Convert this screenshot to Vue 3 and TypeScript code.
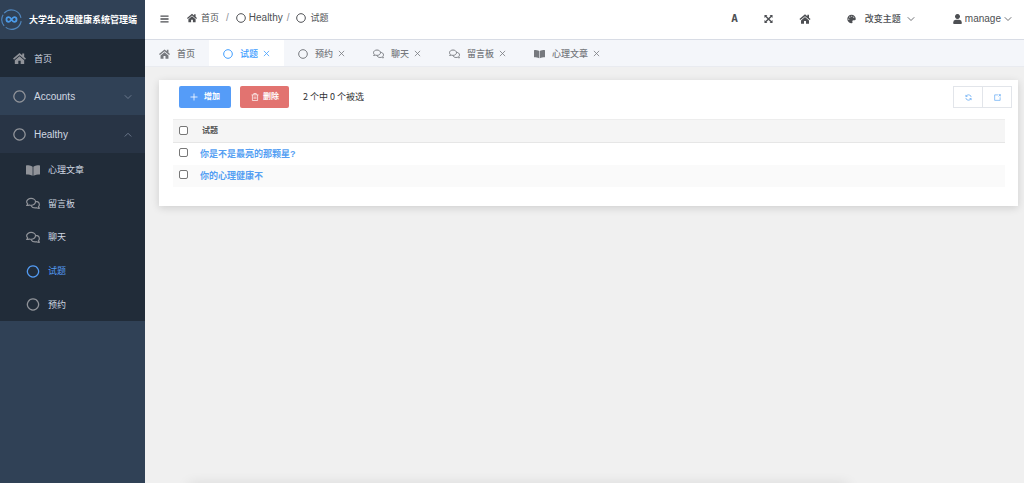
<script setup lang="ts">
import { computed, defineComponent, h, ref } from 'vue'

type Shape = { d: string; box: string; line?: number }

const shapes: Record<string, Shape> = {
  home: {
    box: '0 0 20 18',
    d: 'M10 .6 L0 9 L1.6 11 L10 4 L18.4 11 L20 9 L17.2 6.6 V1.4 H14.2 V4.1 Z M10 5.6 L2.8 11.6 V17.6 H8.2 V12.6 H11.8 V17.6 H17.2 V11.6 Z',
  },
  circle: { box: '0 0 20 20', line: 2, d: 'M10 1.4 A8.6 8.6 0 1 1 9.99 1.4 Z' },
  book: {
    box: '0 0 22 18',
    d: 'M10.4 3 C8 1.2 4 .8 1 .8 Q0 .8 0 1.8 V14.4 Q0 15.4 1 15.4 C4 15.5 7.5 15.9 10.4 17.4 Z M11.6 3 C14 1.2 18 .8 21 .8 Q22 .8 22 1.8 V14.4 Q22 15.4 21 15.4 C18 15.5 14.5 15.9 11.6 17.4 Z',
  },
  chat: {
    box: '0 0 22 18',
    line: 1.9,
    d: 'M1.2 12 C2.2 11.2 2.5 10.4 2.6 9.6 C1.6 8.7 1 7.6 1 6.4 C1 3.4 4.2 1 8 1 C11.8 1 15 3.4 15 6.4 C15 9.4 11.8 11.8 8 11.8 C7 11.8 6 11.6 5.2 11.3 C4 12 2.6 12.3 1.2 12 Z M15 5.6 C18.4 5.8 21 8 21 10.8 C21 12 20.5 13 19.6 13.9 C19.7 14.8 20.2 15.6 21 16.5 C19.5 16.7 18 16.3 16.9 15.6 C16 15.9 15.1 16 14.2 16 C11.6 16 9.3 14.8 8.2 12.9',
  },
  menu: { box: '0 0 20 20', line: 2.8, d: 'M1 3.5 H19 M1 10 H19 M1 16.5 H19' },
  expand: {
    box: '0 0 20 20',
    d: 'M1 1 H7.6 L5.4 3.2 L10 7.8 L14.6 3.2 L12.4 1 H19 V7.6 L16.8 5.4 L12.2 10 L16.8 14.6 L19 12.4 V19 H12.4 L14.6 16.8 L10 12.2 L5.4 16.8 L7.6 19 H1 V12.4 L3.2 14.6 L7.8 10 L3.2 5.4 L1 7.6 Z',
  },
  palette: {
    box: '0 0 20 20',
    d: 'M10 .5 A9.5 9.5 0 1 0 10.4 19.5 C12.4 19.3 12.6 17.6 12 16.2 C11.2 14.4 12.4 12.6 14.2 12.6 H17.2 C18.7 12.6 19.5 11.6 19.5 10 C19.5 4.8 15.2 .5 10 .5 Z M4 11.8 a1.2 1.2 0 1 1 .01 0 Z M6.2 7 a1.2 1.2 0 1 1 .01 0 Z M10.6 5.2 a1.2 1.2 0 1 1 .01 0 Z M15 7.4 a1.2 1.2 0 1 1 .01 0 Z',
  },
  user: {
    box: '0 0 18 20',
    d: 'M9 0 A5 5 0 1 1 8.99 0 Z M5.4 11.5 H12.6 Q17.6 11.8 17.6 17 V18.4 Q17.6 20 16 20 H2 Q.4 20 .4 18.4 V17 Q.4 11.8 5.4 11.5 Z',
  },
  down: { box: '0 0 16 16', line: 1.6, d: 'M1.5 4.5 L8 11 L14.5 4.5' },
  up: { box: '0 0 16 16', line: 1.6, d: 'M1.5 11 L8 4.5 L14.5 11' },
  close: { box: '0 0 16 16', line: 1.8, d: 'M2 2 L14 14 M14 2 L2 14' },
  plus: { box: '0 0 16 16', line: 1.6, d: 'M8 1 V15 M1 8 H15' },
  trash: { box: '0 0 16 16', line: 1.4, d: 'M1 3.7 H15 M5.5 3.5 V1 H10.5 V3.5 M2.8 4 V15 H13.2 V4 M6.3 7 V12 M9.7 7 V12' },
  refresh: {
    box: '0 0 16 16',
    line: 1.7,
    d: 'M2 2 V5.6 H5.6 M2.3 5.4 A6.3 6.3 0 0 1 14.2 7 M14 14 V10.4 H10.4 M13.7 10.6 A6.3 6.3 0 0 1 1.8 9',
  },
  share: { box: '0 0 16 16', line: 1.6, d: 'M9 2 H1.5 V14.5 H14 V7.5 M10.5 1.5 H14.5 V5.5 M14.5 1.5 L10.5 5.5' },
}

const Icon = defineComponent({
  props: { name: { type: String, required: true } },
  setup(props) {
    return () => {
      const s = shapes[props.name]
      const paint = s.line
        ? { fill: 'none', stroke: 'currentColor', 'stroke-width': s.line }
        : { fill: 'currentColor', 'fill-rule': 'evenodd' }
      return h('svg', { viewBox: s.box, 'aria-hidden': 'true' }, [h('path', { d: s.d, ...paint })])
    }
  },
})

const subItems = [
  { icon: 'book', label: '心理文章' },
  { icon: 'chat', label: '留言板' },
  { icon: 'chat', label: '聊天' },
  { icon: 'circle', label: '试题' },
  { icon: 'circle', label: '预约' },
]
const tabs = ref([
  { icon: 'home', label: '首页' },
  { icon: 'circle', label: '试题' },
  { icon: 'circle', label: '预约' },
  { icon: 'chat', label: '聊天' },
  { icon: 'chat', label: '留言板' },
  { icon: 'book', label: '心理文章' },
])
const active = ref('试题')
const rows = ref([
  { id: 1, title: '你是不是最亮的那颗星?', picked: false },
  { id: 2, title: '你的心理健康不', picked: false },
])
const pickedCount = computed(() => rows.value.filter((r) => r.picked).length)
const allPicked = computed({
  get: () => rows.value.length > 0 && pickedCount.value === rows.value.length,
  set: (v: boolean) => rows.value.forEach((r) => (r.picked = v)),
})
function closeTab(label: string) {
  tabs.value = tabs.value.filter((t) => t.label !== label)
}
</script>

<template>
  <div class="layout">
    <aside class="sidebar">
      <div class="brand">
        <svg class="logo" viewBox="0 0 40 40" aria-hidden="true">
          <path d="M6 8 A18.5 18.5 0 0 1 38 17 M38.4 23 A18.5 18.5 0 0 1 9 35 M6 32 A18.5 18.5 0 0 1 4 11" fill="none" stroke="#5086bd" stroke-width="2.2" />
          <path d="M20 20 C18 16.8 16.8 15.6 14.8 15.6 A4.4 4.4 0 0 0 14.8 24.4 C18.8 24.4 21.2 15.6 25.2 15.6 A4.4 4.4 0 0 1 25.2 24.4 C23.2 24.4 22 23.2 20 20" fill="none" stroke="#4b9ae8" stroke-width="3.4" />
        </svg>
        <h1>大学生心理健康系统管理端</h1>
      </div>
      <nav>
        <a href="#" class="item first"><Icon name="home" /><span>首页</span></a>
        <button type="button" class="item group"><Icon name="circle" /><span>Accounts</span><Icon name="down" class="arrow" /></button>
        <button type="button" class="item group open"><Icon name="circle" /><span>Healthy</span><Icon name="up" class="arrow" /></button>
        <div class="submenu">
          <a v-for="s in subItems" :key="s.label" href="#" class="sub" :class="{ on: s.label === active }" @click.prevent="active = s.label">
            <Icon :name="s.icon" /><span>{{ s.label }}</span>
          </a>
        </div>
      </nav>
    </aside>

    <div class="main">
      <header class="topbar">
        <button type="button" class="plain burger" aria-label="菜单"><Icon name="menu" /></button>
        <div class="crumbs">
          <span class="crumb"><Icon name="home" />首页</span>
          <span class="slash">/</span>
          <span class="crumb latin"><Icon name="circle" />Healthy</span>
          <span class="slash">/</span>
          <span class="crumb"><Icon name="circle" />试题</span>
        </div>
        <div class="tools">
          <button type="button" class="plain font" aria-label="字体">A</button>
          <button type="button" class="plain" aria-label="全屏"><Icon name="expand" /></button>
          <button type="button" class="plain" aria-label="主页"><Icon name="home" class="wide" /></button>
          <button type="button" class="plain theme"><Icon name="palette" /><span>改变主题</span><Icon name="down" class="caret" /></button>
          <button type="button" class="plain user"><Icon name="user" /><span>manage</span><Icon name="down" class="caret" /></button>
        </div>
      </header>

      <div class="tabs">
        <div v-for="t in tabs" :key="t.label" class="tab" :class="{ on: t.label === active }">
          <a href="#" @click.prevent="active = t.label"><Icon :name="t.icon" :class="{ wide: t.icon !== 'circle' }" /><span>{{ t.label }}</span></a>
          <button v-if="t.label !== '首页'" type="button" class="plain close" :aria-label="'关闭' + t.label" @click="closeTab(t.label)"><Icon name="close" /></button>
        </div>
      </div>

      <main class="content">
        <section class="card">
          <div class="actions">
            <button type="button" class="btn add"><Icon name="plus" />增加</button>
            <button type="button" class="btn del"><Icon name="trash" />删除</button>
            <span class="count">{{ rows.length }} 个中 {{ pickedCount }} 个被选</span>
            <div class="pair">
              <button type="button" aria-label="刷新"><Icon name="refresh" /></button>
              <button type="button" aria-label="新窗口打开"><Icon name="share" /></button>
            </div>
          </div>
          <table>
            <thead>
              <tr>
                <th class="check"><input v-model="allPicked" type="checkbox" aria-label="全选" /></th>
                <th class="title">试题</th>
              </tr>
            </thead>
            <tbody>
              <tr v-for="r in rows" :key="r.id">
                <td class="check"><input v-model="r.picked" type="checkbox" :aria-label="r.title" /></td>
                <td><a href="#">{{ r.title }}</a></td>
              </tr>
            </tbody>
          </table>
        </section>
      </main>
      <div class="glow"></div>
    </div>
  </div>
</template>

<style>
body {
  background: #f0f0f0;
}
</style>

<style scoped>
.layout {
  display: flex;
  min-height: 100vh;
  font: 9px/14px "Liberation Sans", "Noto Sans CJK SC", sans-serif;
  color: #303133;
}
.layout * {
  box-sizing: border-box;
}
button {
  font: inherit;
  cursor: pointer;
}
a {
  color: inherit;
  text-decoration: none;
}
svg {
  display: block;
  flex: none;
}
.sidebar {
  flex: none;
  width: 145px;
  background: #304156;
  color: #d0d8e2;
}
.brand {
  display: flex;
  align-items: center;
  gap: 7px;
  height: 39px;
  padding-left: 1px;
  color: #fff;
}
.logo {
  width: 21px;
  height: 21px;
}
h1 {
  margin: 0;
  font-size: 9px;
  font-weight: 700;
  white-space: nowrap;
}
.item {
  display: flex;
  align-items: center;
  gap: 8px;
  width: 100%;
  height: 38px;
  padding: 1px 13px 0;
  border: 0;
  background: none;
  color: inherit;
}
.item svg {
  width: 13px;
  height: 13px;
  color: #909399;
}
.group {
  font-size: 10px;
}
.first {
  background: #1f2a37;
}
.open {
  background: #283445;
}
.item .arrow {
  width: 8px;
  height: 8px;
  margin-left: auto;
  color: #78869a;
}
.submenu {
  display: grid;
  min-height: 168px;
  background: #212c39;
}
.sub {
  display: flex;
  align-items: center;
  gap: 8px;
  padding: 1px 26px 0;
}
.sub svg {
  width: 14px;
  height: 13px;
  color: #909399;
}
.sub.on,
.sub.on svg {
  color: #539bf3;
}
.main {
  position: relative;
  flex: 1;
  min-width: 0;
  overflow: hidden;
  background: #f0f0f0;
}
.topbar {
  display: flex;
  align-items: center;
  height: 40px;
  padding: 0 12px 1px 15px;
  border-bottom: 1px solid #d8dce5;
  background: #fff;
}
.plain {
  display: flex;
  align-items: center;
  padding: 0;
  border: 0;
  background: none;
  color: #4d4f53;
}
.plain svg {
  width: 9px;
  height: 10px;
}
.crumbs {
  display: flex;
  align-items: center;
  gap: 7px;
  margin-left: 18px;
  padding-bottom: 2px;
  color: #4d4f53;
}
.crumb {
  display: flex;
  align-items: center;
  gap: 4px;
}
.crumb svg {
  width: 10px;
  height: 10px;
}
.latin {
  gap: 3px;
  font-size: 10px;
}
.slash {
  color: #909399;
  font-size: 10px;
}
.latin + .slash {
  margin-left: -3px;
}
.tools {
  display: flex;
  align-items: center;
  gap: 26px;
  margin-left: auto;
}
.font {
  font: 700 11px/14px "DejaVu Sans Mono", monospace;
}
.plain .wide {
  width: 12px;
}
.theme {
  gap: 9px;
  margin-left: 10px;
  font-weight: 500;
}
.plain .caret {
  width: 8px;
  height: 8px;
  margin-left: -3px;
}
.user {
  gap: 3px;
  margin-left: 12px;
  font-size: 10px;
}
.user .caret {
  margin-left: 0;
}
.tabs {
  display: flex;
  height: 27px;
  border-bottom: 1px solid #e9ebf0;
  background: #f4f6fa;
}
.tab {
  display: flex;
  align-items: center;
  gap: 5px;
  padding: 1px 14px 0;
  color: #76797e;
  font-weight: 500;
}
.tab a {
  display: flex;
  align-items: center;
  gap: 7px;
}
.tab a svg {
  width: 10px;
  height: 10px;
}
.tab a .wide {
  width: 11px;
}
.tab.on {
  background: #fff;
  color: #409eff;
}
.tab .close {
  color: inherit;
}
.tab .close svg {
  width: 7px;
  height: 7px;
}
.content {
  padding: 13px 6px 20px 14px;
}
.card {
  padding: 6px 13px 19px 14px;
  background: #fff;
  box-shadow: 0 2px 8px rgba(0, 0, 0, 0.14);
}
.actions {
  display: flex;
  align-items: center;
  margin: 0 -7px 11px 6px;
}
.btn {
  display: flex;
  align-items: center;
  justify-content: center;
  gap: 5px;
  height: 22px;
  padding: 0 11px;
  border: 0;
  border-radius: 2px;
  color: #fff;
  font-size: 8px;
  font-weight: 700;
}
.btn svg {
  width: 8px;
  height: 8px;
}
.add {
  gap: 6px;
  margin-right: 9px;
  background: #559cf8;
}
.del {
  gap: 4px;
  padding: 0 10px 0 11px;
  background: #e27370;
}
.count {
  margin-left: 14px;
  font-family: "Noto Sans CJK SC", sans-serif;
}
.pair {
  display: flex;
  margin-left: auto;
  border: 1px solid #e2e5ea;
}
.pair button {
  display: grid;
  place-items: center;
  width: 28px;
  height: 20px;
  padding: 0;
  border: 0;
  background: #fff;
  color: #62a9f3;
}
.pair button + button {
  width: 29px;
  border-left: 1px solid #e2e5ea;
}
.pair svg {
  width: 7px;
  height: 7px;
}
table {
  width: 100%;
  border-collapse: collapse;
}
th,
td {
  height: 22px;
  padding: 0;
  text-align: left;
  vertical-align: middle;
}
th {
  height: 23px;
  border-top: 1px solid #ededed;
  border-bottom: 1px solid #e6e6e6;
  background: #f5f5f5;
  font-size: 8px;
}
.title {
  padding-left: 2px;
  color: #555;
}
.check {
  width: 27px;
  padding-left: 6px;
}
td a {
  color: #559ff3;
  font-weight: 700;
}
tbody tr:nth-child(even) {
  background: #fafafa;
}
input {
  display: block;
  width: 9px;
  height: 9px;
  margin: 0 0 2px;
  border: 1px solid #777;
  border-radius: 2px;
  background: #fff;
  appearance: none;
}
input:checked {
  background: #409eff;
}
.glow {
  position: absolute;
  right: 20%;
  bottom: -10px;
  left: 5%;
  height: 8px;
  box-shadow: 0 0 14px rgba(0, 0, 0, 0.14);
}
</style>
